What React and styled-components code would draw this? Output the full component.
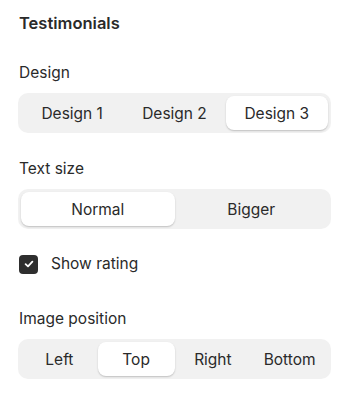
import styled, { createGlobalStyle } from "styled-components";

const GlobalStyle = createGlobalStyle`
  body {
    margin: 0;
    background: #ffffff;
    font-family: Inter, "Liberation Sans", sans-serif;
    color: #2a2a2a;
  }
`;

const Panel = styled.div`
  width: 349px;
  box-sizing: border-box;
  padding: 12px 18px 20px 18px;
`;

const Title = styled.h2`
  margin: 0 0 0 1px;
  font-size: 16.5px;
  line-height: 22px;
  font-weight: 600;
  color: #2a2a2a;
`;

const Field = styled.div`
  margin-top: ${(p) => p.$top}px;
`;

const Label = styled.div`
  margin: 0 0 10px 1px;
  font-size: 15.5px;
  line-height: 20px;
  color: #2a2a2a;
`;

const Segments = styled.div`
  display: grid;
  grid-template-columns: repeat(${(p) => p.$count}, 1fr);
  padding: 3px;
  border-radius: 10px;
  background: #f1f1f1;
  height: 40px;
  box-sizing: border-box;
`;

const Segment = styled.button`
  border: none;
  margin: 0;
  padding: 0;
  font-family: inherit;
  font-size: 15.5px;
  color: #2a2a2a;
  border-radius: 8px;
  cursor: pointer;
  background: ${(p) => (p.$active ? "#ffffff" : "transparent")};
  box-shadow: ${(p) =>
    p.$active ? "0 1px 2px rgba(0, 0, 0, 0.16), 0 1px 1px rgba(0, 0, 0, 0.05)" : "none"};
`;

const CheckRow = styled.label`
  display: flex;
  align-items: center;
  gap: 13px;
  margin: 25px 0 0 1px;
  font-size: 15.5px;
  line-height: 20px;
  color: #2a2a2a;
`;

const Box = styled.span`
  width: 19px;
  height: 19px;
  border-radius: 4px;
  background: #2e2e2e;
  display: flex;
  align-items: center;
  justify-content: center;
`;

const SegmentGroup = ({ options, active }) => (
  <Segments $count={options.length}>
    {options.map((o) => (
      <Segment key={o} $active={o === active}>
        {o}
      </Segment>
    ))}
  </Segments>
);

export default function App() {
  return (
    <>
      <GlobalStyle />
      <Panel>
        <Title>Testimonials</Title>
        <Field $top={29}>
          <Label>Design</Label>
          <SegmentGroup options={["Design 1", "Design 2", "Design 3"]} active="Design 3" />
        </Field>
        <Field $top={26}>
          <Label>Text size</Label>
          <SegmentGroup options={["Normal", "Bigger"]} active="Normal" />
        </Field>
        <CheckRow>
          <Box>
            <svg width="12" height="12" viewBox="0 0 12 12">
              <path d="M2.6 6.2 L5 8.4 L9.4 3.6" fill="none" stroke="#fff" strokeWidth="1.8" strokeLinecap="round" strokeLinejoin="round" />
            </svg>
          </Box>
          Show rating
        </CheckRow>
        <Field $top={35}>
          <Label>Image position</Label>
          <SegmentGroup options={["Left", "Top", "Right", "Bottom"]} active="Top" />
        </Field>
      </Panel>
    </>
  );
}
